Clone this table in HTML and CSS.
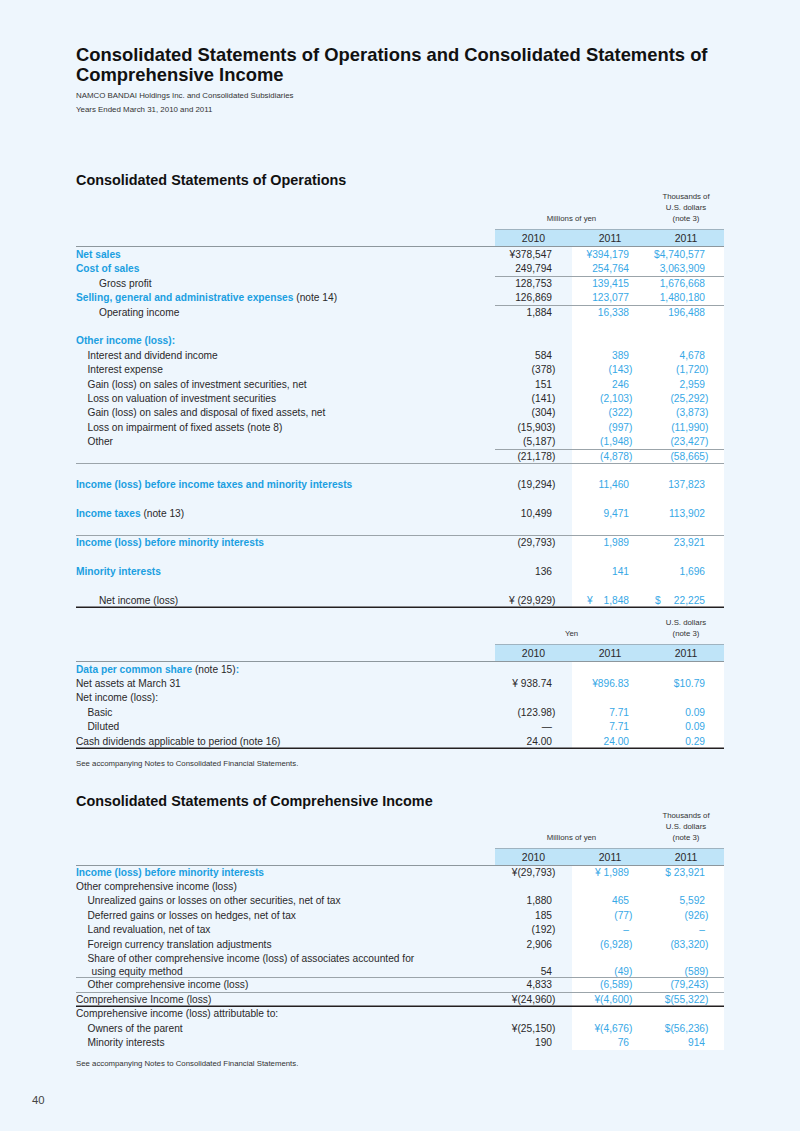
FILE: index.html
```html
<!DOCTYPE html>
<html lang="en">
<head>
<meta charset="utf-8">
<title>Consolidated Statements of Operations and Consolidated Statements of Comprehensive Income</title>
<link rel="stylesheet" href="styles.css">
</head>
<body>
<div class="page">
  <h1 class="title">Consolidated Statements of Operations and Consolidated Statements of Comprehensive Income</h1>
  <p class="sub">NAMCO BANDAI Holdings Inc. and Consolidated Subsidiaries<br>Years Ended March 31, 2010 and 2011</p>

  <h2 class="sec sec-first">Consolidated Statements of Operations</h2>
  <table class="fin fin-a">
    <colgroup><col class="c-l"><col class="c-n1"><col class="c-n"><col class="c-n"></colgroup>
    <thead>
      <tr class="units">
        <td></td>
        <td colspan="2">Millions of yen</td>
        <td>Thousands of<br>U.S. dollars<br>(note 3)</td>
      </tr>
      <tr class="band">
        <td></td><td class="y">2010</td><td class="y">2011</td><td class="y">2011</td>
      </tr>
    </thead>
    <tbody>
      <tr><td class="b">Net sales</td><td>¥378,547</td><td>¥394,179</td><td>$4,740,577</td></tr>
      <tr class="ln"><td class="b">Cost of sales</td><td>249,794</td><td>254,764</td><td>3,063,909</td></tr>
      <tr><td class="i2">Gross profit</td><td>128,753</td><td>139,415</td><td>1,676,668</td></tr>
      <tr class="ln"><td><span class="b">Selling, general and administrative expenses</span> (note 14)</td><td>126,869</td><td>123,077</td><td>1,480,180</td></tr>
      <tr><td class="i2">Operating income</td><td>1,884</td><td>16,338</td><td>196,488</td></tr>
      <tr class="gap"><td></td><td></td><td></td><td></td></tr>
      <tr><td class="b">Other income (loss):</td><td></td><td></td><td></td></tr>
      <tr><td class="i1">Interest and dividend income</td><td>584</td><td>389</td><td>4,678</td></tr>
      <tr><td class="i1">Interest expense</td><td><span class="p">(378)</span></td><td><span class="p">(143)</span></td><td><span class="p">(1,720)</span></td></tr>
      <tr><td class="i1">Gain (loss) on sales of investment securities, net</td><td>151</td><td>246</td><td>2,959</td></tr>
      <tr><td class="i1">Loss on valuation of investment securities</td><td><span class="p">(141)</span></td><td><span class="p">(2,103)</span></td><td><span class="p">(25,292)</span></td></tr>
      <tr><td class="i1">Gain (loss) on sales and disposal of fixed assets, net</td><td><span class="p">(304)</span></td><td><span class="p">(322)</span></td><td><span class="p">(3,873)</span></td></tr>
      <tr><td class="i1">Loss on impairment of fixed assets (note 8)</td><td><span class="p">(15,903)</span></td><td><span class="p">(997)</span></td><td><span class="p">(11,990)</span></td></tr>
      <tr class="ln"><td class="i1">Other</td><td><span class="p">(5,187)</span></td><td><span class="p">(1,948)</span></td><td><span class="p">(23,427)</span></td></tr>
      <tr class="lf"><td></td><td><span class="p">(21,178)</span></td><td><span class="p">(4,878)</span></td><td><span class="p">(58,665)</span></td></tr>
      <tr class="gap"><td></td><td></td><td></td><td></td></tr>
      <tr><td class="b">Income (loss) before income taxes and minority interests</td><td><span class="p">(19,294)</span></td><td>11,460</td><td>137,823</td></tr>
      <tr class="gap"><td></td><td></td><td></td><td></td></tr>
      <tr><td><span class="b">Income taxes</span> (note 13)</td><td>10,499</td><td>9,471</td><td>113,902</td></tr>
      <tr class="gap lf"><td></td><td></td><td></td><td></td></tr>
      <tr><td class="b">Income (loss) before minority interests</td><td><span class="p">(29,793)</span></td><td>1,989</td><td>23,921</td></tr>
      <tr class="gap"><td></td><td></td><td></td><td></td></tr>
      <tr><td class="b">Minority interests</td><td>136</td><td>141</td><td>1,696</td></tr>
      <tr class="gap"><td></td><td></td><td></td><td></td></tr>
      <tr class="lt"><td class="i2">Net income (loss)</td><td><span class="p">¥ (29,929)</span></td><td><span class="cur cur-y">¥</span>1,848</td><td><span class="cur cur-d">$</span>22,225</td></tr>
    </tbody>
  </table>

  <table class="fin fin-b">
    <colgroup><col class="c-l"><col class="c-n1"><col class="c-n"><col class="c-n"></colgroup>
    <thead>
      <tr class="units">
        <td></td>
        <td colspan="2">Yen</td>
        <td>U.S. dollars<br>(note 3)</td>
      </tr>
      <tr class="band">
        <td></td><td class="y">2010</td><td class="y">2011</td><td class="y">2011</td>
      </tr>
    </thead>
    <tbody>
      <tr><td><span class="b">Data per common share</span> (note 15)<span class="b">:</span></td><td></td><td></td><td></td></tr>
      <tr><td>Net assets at March 31</td><td>¥ 938.74</td><td>¥896.83</td><td>$10.79</td></tr>
      <tr><td>Net income (loss):</td><td></td><td></td><td></td></tr>
      <tr><td class="i1">Basic</td><td><span class="p">(123.98)</span></td><td>7.71</td><td>0.09</td></tr>
      <tr><td class="i1">Diluted</td><td>—</td><td>7.71</td><td>0.09</td></tr>
      <tr class="lt"><td>Cash dividends applicable to period (note 16)</td><td>24.00</td><td>24.00</td><td>0.29</td></tr>
    </tbody>
  </table>
  <p class="note note-a">See accompanying Notes to Consolidated Financial Statements.</p>

  <h2 class="sec sec-second">Consolidated Statements of Comprehensive Income</h2>
  <table class="fin fin-c">
    <colgroup><col class="c-l"><col class="c-n1"><col class="c-n"><col class="c-n"></colgroup>
    <thead>
      <tr class="units">
        <td></td>
        <td colspan="2">Millions of yen</td>
        <td>Thousands of<br>U.S. dollars<br>(note 3)</td>
      </tr>
      <tr class="band">
        <td></td><td class="y">2010</td><td class="y">2011</td><td class="y">2011</td>
      </tr>
    </thead>
    <tbody>
      <tr><td class="b">Income (loss) before minority interests</td><td><span class="p">¥(29,793)</span></td><td>¥ 1,989</td><td>$ 23,921</td></tr>
      <tr><td>Other comprehensive income (loss)</td><td></td><td></td><td></td></tr>
      <tr><td class="i1">Unrealized gains or losses on other securities, net of tax</td><td>1,880</td><td>465</td><td>5,592</td></tr>
      <tr><td class="i1">Deferred gains or losses on hedges, net of tax</td><td>185</td><td><span class="p">(77)</span></td><td><span class="p">(926)</span></td></tr>
      <tr><td class="i1">Land revaluation, net of tax</td><td><span class="p">(192)</span></td><td>–</td><td>–</td></tr>
      <tr><td class="i1">Foreign currency translation adjustments</td><td>2,906</td><td><span class="p">(6,928)</span></td><td><span class="p">(83,320)</span></td></tr>
      <tr class="lf two"><td class="hang">Share of other comprehensive income (loss) of associates accounted for<br>using equity method</td><td>54</td><td><span class="p">(49)</span></td><td><span class="p">(589)</span></td></tr>
      <tr class="lf"><td class="i1">Other comprehensive income (loss)</td><td>4,833</td><td><span class="p">(6,589)</span></td><td><span class="p">(79,243)</span></td></tr>
      <tr class="lt"><td>Comprehensive Income (loss)</td><td><span class="p">¥(24,960)</span></td><td><span class="p">¥(4,600)</span></td><td><span class="p">$(55,322)</span></td></tr>
      <tr><td>Comprehensive income (loss) attributable to:</td><td></td><td></td><td></td></tr>
      <tr><td class="i1">Owners of the parent</td><td><span class="p">¥(25,150)</span></td><td><span class="p">¥(4,676)</span></td><td><span class="p">$(56,236)</span></td></tr>
      <tr><td class="i1">Minority interests</td><td>190</td><td>76</td><td>914</td></tr>
    </tbody>
  </table>
  <p class="note note-b">See accompanying Notes to Consolidated Financial Statements.</p>

  <div class="folio">40</div>
</div>
</body>
</html>
```

FILE: styles.css
```css
html, body {
  margin: 0;
  padding: 0;
}
body {
  background: #eef6fd;
  color: #2a2829;
  font-family: "Liberation Sans", Arial, sans-serif;
}
.page {
  width: 648px;
  padding: 45px 76px 0 76px;
  min-height: 1086px;
}
.title {
  margin: 0;
  font-size: 18.4px;
  line-height: 20px;
  font-weight: bold;
  color: #111;
}
.sub {
  margin: 4px 0 0;
  font-size: 7.9px;
  line-height: 14px;
  color: #333;
}
.sec {
  margin: 0;
  font-size: 14.4px;
  line-height: 18px;
  font-weight: bold;
  color: #111;
}
.sec-first { margin-top: 54px; }
.sec-second { margin-top: 23px; }

.fin {
  width: 648px;
  table-layout: fixed;
  border-collapse: separate;
  border-spacing: 0;
  font-size: 10.2px;
}
.fin-a { margin-top: 2px; }
.fin-b { margin-top: 8.5px; }
.fin-c { margin-top: 0; }
.c-l { width: 419px; }
.c-n1 { width: 77px; }
.c-n { width: 76px; }

.fin td {
  padding: 0;
  line-height: 14.4px;
  white-space: nowrap;
  text-align: right;
}
.fin tbody td {
  height: 14.4px;
}
.fin-a tbody tr:first-child td,
.fin-b tbody tr:first-child td {
  padding-top: 1px;
}
.fin td:first-child {
  text-align: left;
}
.fin td:nth-child(2) { padding-right: 20px; }
.fin td:nth-child(3),
.fin td:nth-child(4) { padding-right: 19px; }

.units td {
  font-size: 7.8px;
  line-height: 11px;
  text-align: center !important;
  vertical-align: bottom;
  padding: 0 0 5px 0 !important;
  color: #333;
}
.band td {
  line-height: 18px;
  height: 18px;
  padding: 0 !important;
  box-shadow: inset 0 -1px 0 #8d979d;
}
.band td.y {
  background: #bfe4f8;
  text-align: center;
  font-size: 10.5px;
  box-shadow: inset 0 1px 0 #9fb3c0, inset 0 -1px 0 #8d979d;
}

.fin tbody td:nth-child(3),
.fin tbody td:nth-child(4) {
  background: #ffffff;
  color: #37a8e6;
}

.b {
  font-weight: bold;
  color: #1b9fe1;
}
.i1 { padding-left: 11.5px !important; }
.i2 { padding-left: 23px !important; }
.hang {
  padding-left: 15.5px !important;
  text-indent: -4px;
}

.p { margin-right: -3.4px; }

.cur { float: left; }
.cur-y { margin-left: 15px; }
.cur-d { margin-left: 7px; }

.ln td:not(:first-child) { box-shadow: inset 0 -1px 0 #9ba4aa; }
.lf td { box-shadow: inset 0 -1px 0 #9ba4aa; }
.lt td { box-shadow: inset 0 -1.6px 0 #231f20; }

.fin tbody tr.two td {
  height: 26.4px;
  line-height: 13.2px;
  vertical-align: bottom;
}

.note {
  margin: 0;
  font-size: 7.8px;
  line-height: 10px;
  color: #333;
}
.note-a { margin-top: 9.6px; }
.note-b { margin-top: 8.5px; }

.folio {
  margin: 24px 0 0 -44px;
  font-size: 11.3px;
  line-height: 14px;
  color: #444;
}
```
